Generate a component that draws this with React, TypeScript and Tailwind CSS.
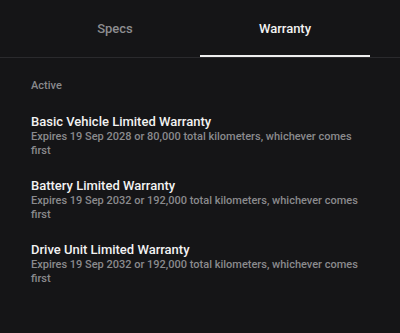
import React from 'react';

const warranties = [
  { title: 'Basic Vehicle Limited Warranty', detail: 'Expires 19 Sep 2028 or 80,000 total kilometers, whichever comes first' },
  { title: 'Battery Limited Warranty', detail: 'Expires 19 Sep 2032 or 192,000 total kilometers, whichever comes first' },
  { title: 'Drive Unit Limited Warranty', detail: 'Expires 19 Sep 2032 or 192,000 total kilometers, whichever comes first' },
];

export default function App() {
  return (
    <div className="w-[400px] h-[333px] bg-[#151517] font-['Roboto',sans-serif] overflow-hidden">
      {/* Tabs */}
      <div className="border-b border-[#2a2a2d]">
        <div className="flex mx-[30px]">
          <button className="flex-1 h-[57px] pt-[3px] flex items-center justify-center text-[13px] font-medium text-[#8d8d90] border-b-2 border-transparent">
            Specs
          </button>
          <button className="flex-1 h-[57px] pt-[3px] flex items-center justify-center text-[13px] font-medium text-[#f2f2f2] border-b-2 border-[#eeeeee]">
            Warranty
          </button>
        </div>
      </div>

      {/* Warranty list */}
      <div className="pt-[21px] pl-[31px] pr-[30px]">
        <p className="text-[11px] leading-[14px] font-medium text-[#8a8a8d] mb-[21px]">Active</p>
        <div className="flex flex-col gap-[20px]">
          {warranties.map(w => (
            <div key={w.title}>
              <p className="text-[13px] leading-[16px] font-medium text-[#f2f2f2]">{w.title}</p>
              <p className="text-[11px] leading-[14px] font-medium text-[#8a8a8d]">{w.detail}</p>
            </div>
          ))}
        </div>
      </div>
    </div>
  );
}
